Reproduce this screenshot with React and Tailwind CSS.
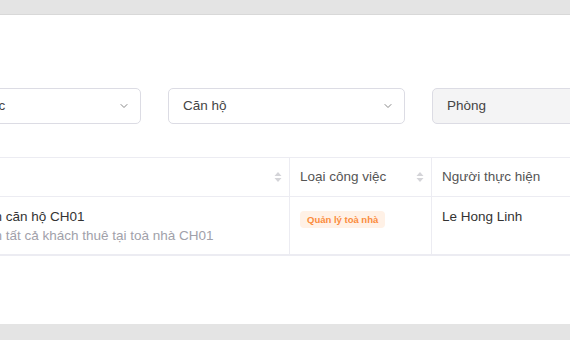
import { ChevronDown } from 'lucide-react';

function SortIcon() {
    return (
        <svg width="8" height="12" viewBox="0 0 8 12" className="shrink-0">
            <path d="M4 1 L7.5 5 L0.5 5 Z" fill="#d4d4d8" />
            <path d="M4 11 L7.5 7 L0.5 7 Z" fill="#d4d4d8" />
        </svg>
    );
}

function Select({ label, disabled }) {
    return (
        <div
            className={`h-[36px] w-[237px] shrink-0 rounded-[5px] border border-[#dcdce4] flex items-center justify-between pl-[14px] pr-[10px] text-[13.5px] text-[#444] ${disabled ? 'bg-[#f4f4f5]' : 'bg-white'}`}
        >
            <span>{label}</span>
            {!disabled && <ChevronDown size={12} strokeWidth={2} className="text-[#888]" />}
        </div>
    );
}

export default function App() {
    return (
        <div className="w-[570px] h-[340px] bg-[#e4e4e4] flex flex-col font-['Liberation_Sans',Arial,sans-serif]">
            <div className="h-[15px] shrink-0 border-b border-[#d8d8d8]" />
            <div className="h-[309px] bg-white overflow-hidden">
                <div className="-ml-[96px] w-[800px]">
                    {/* Filters */}
                    <div className="flex gap-[27px] mt-[73px]">
                        <Select label="Loại công việc" />
                        <Select label="Căn hộ" />
                        <Select label="Phòng" disabled />
                    </div>

                    {/* Table */}
                    <div className="mt-[33px] border-t border-[#ececf2]">
                        <div className="flex h-[39px] border-b border-[#ececf2] text-[13.5px] text-[#555]">
                            <div className="w-[386px] flex items-center justify-end pr-[7px] border-r border-[#ececf2]">
                                <SortIcon />
                            </div>
                            <div className="w-[142px] flex items-center justify-between pl-[10px] pr-[7px] border-r border-[#ececf2]">
                                <span>Loại công việc</span>
                                <SortIcon />
                            </div>
                            <div className="flex-1 flex items-center pl-[10px]">
                                <span>Người thực hiện</span>
                            </div>
                        </div>
                        <div className="flex h-[59px] border-b-2 border-[#ececf2] text-[13.5px]">
                            <div className="w-[386px] border-r border-[#ececf2] pt-[10px] overflow-hidden">
                                <div className="-ml-[16px] whitespace-nowrap">
                                    <div className="text-[#333] leading-[19px]">Thông báo tới toàn căn hộ CH01</div>
                                    <div className="text-[#a1a1aa] leading-[20px]">Thông báo tới toàn tất cả khách thuê tại toà nhà CH01</div>
                                </div>
                            </div>
                            <div className="w-[142px] border-r border-[#ececf2] pt-[12px] pl-[10px]">
                                <span className="inline-block rounded-[4px] bg-[#fff1e6] text-[#fb8c3c] text-[9.5px] font-bold px-[7px] py-[3px] leading-[11px]">
                                    Quản lý toà nhà
                                </span>
                            </div>
                            <div className="flex-1 pt-[10px] pl-[10px] text-[#333]">Le Hong Linh</div>
                        </div>
                    </div>
                </div>
            </div>
        </div>
    );
}
